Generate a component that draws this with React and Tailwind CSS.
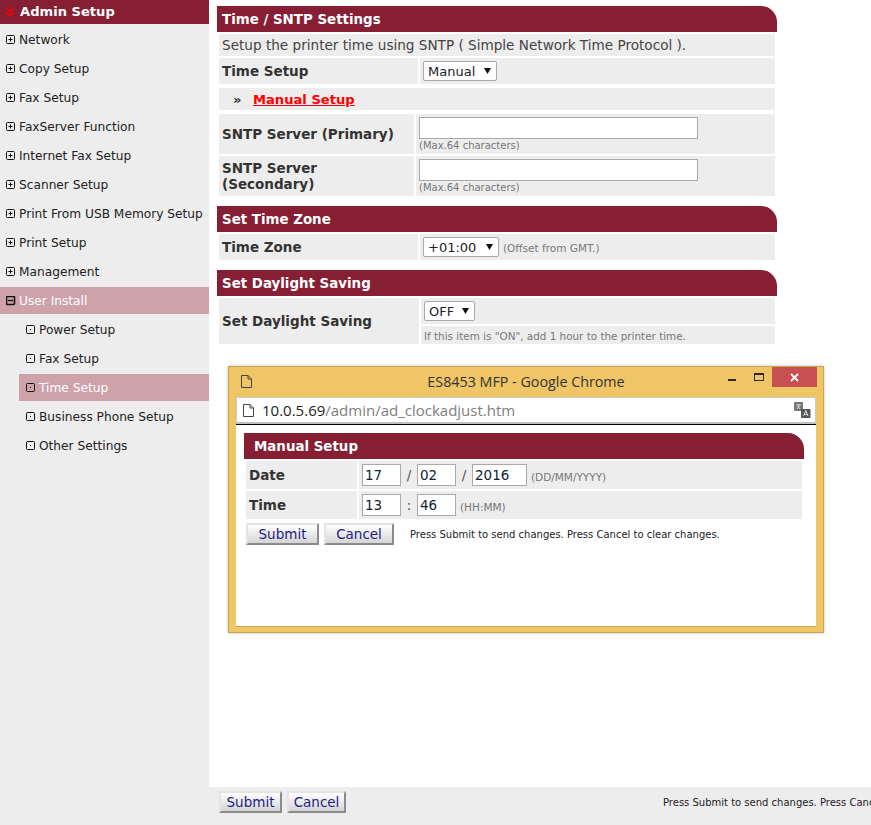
import React from 'react';

const menuItems = [
    { label: 'Network' },
    { label: 'Copy Setup' },
    { label: 'Fax Setup' },
    { label: 'FaxServer Function' },
    { label: 'Internet Fax Setup' },
    { label: 'Scanner Setup' },
    { label: 'Print From USB Memory Setup' },
    { label: 'Print Setup' },
    { label: 'Management' },
    { label: 'User Install', open: true, active: true },
    { label: 'Power Setup', sub: true },
    { label: 'Fax Setup', sub: true },
    { label: 'Time Setup', sub: true, active: true },
    { label: 'Business Phone Setup', sub: true },
    { label: 'Other Settings', sub: true },
];

function TreeIcon({ type }) {
    const strokeWidth = type === 'minus' ? 1.6 : 1;
    return (
        <svg width="10" height="10" viewBox="0 0 10 10" className="shrink-0">
            <rect x="0.5" y="0.5" width="8" height="8" rx="1" fill="none" stroke="#111" strokeWidth={strokeWidth} />
            {type === 'dot' && <rect x="4" y="4" width="1" height="1" fill="#111" />}
            {type === 'plus' && <path d="M2.5 4.5h4M4.5 2.5v4" stroke="#111" fill="none" />}
            {type === 'minus' && <path d="M2 4.5h5" stroke="#111" strokeWidth="1.4" fill="none" />}
        </svg>
    );
}

function MenuRow({ item }) {
    const icon = item.sub ? 'dot' : item.open ? 'minus' : 'plus';
    return (
        <div className="h-[29px] py-[1px]">
            <div className={`h-full flex items-center gap-[3px] text-[12.2px] ${item.sub ? 'ml-[19px] pl-[7px]' : 'pl-[6px]'} ${item.active ? 'bg-[#cda2a9] text-white' : 'text-[#222]'}`}>
                <TreeIcon type={icon} />
                <span className="whitespace-nowrap pt-[2px]">{item.label}</span>
            </div>
        </div>
    );
}

function Sidebar() {
    return (
        <aside className="w-[209px] shrink-0 bg-[#ededed]">
            <div className="h-[24px] bg-[#861f34] flex items-center gap-[6px] pl-[6px] text-white font-bold text-[13.1px]">
                <svg width="8" height="9" viewBox="0 0 8 9" className="shrink-0">
                    <path d="M0.5 0.5L4 3.5L7.5 0.5M0.5 4.5L4 7.5L7.5 4.5" fill="none" stroke="#ff0000" strokeWidth="1.6" />
                </svg>
                Admin Setup
            </div>
            <div className="pt-[1px]">
                {menuItems.map((item, i) => (
                    <MenuRow key={i} item={item} />
                ))}
            </div>
        </aside>
    );
}

function SectionHeader({ children, inset = 'pl-[5px]' }) {
    return (
        <div className={`h-[26px] pt-[2px] bg-[#861f34] rounded-tr-[16px] flex items-center ${inset} text-white font-bold text-[13.4px]`}>
            {children}
        </div>
    );
}

function Label({ width, children }) {
    return (
        <div className={`${width} shrink-0 bg-[#ededed] flex items-center pl-[3px] font-bold text-[13.5px] leading-[16px] text-[#333]`}>
            {children}
        </div>
    );
}

function FakeSelect({ value, width }) {
    return (
        <div className={`${width} h-[20px] bg-white border border-[#a9a9a9] rounded-[2px] flex items-center justify-between pl-[4px] pr-[5px] text-[13px] text-[#222]`}>
            <span className="pt-[1px]">{value}</span>
            <svg width="7" height="6" viewBox="0 0 7 6" className="shrink-0">
                <path d="M0 0h7L3.5 6z" fill="#111" />
            </svg>
        </div>
    );
}

function Hint({ size = 'text-[10.5px]', children }) {
    return <span className={`${size} text-[#777] whitespace-nowrap`}>{children}</span>;
}

function TextBox({ width, value }) {
    return (
        <input
            readOnly
            defaultValue={value}
            className={`${width} h-[22px] bg-white border border-[#a9a9a9] px-[2px] text-[13.5px] text-[#123] outline-none`}
        />
    );
}

function ServerRow({ label }) {
    return (
        <div className="flex gap-[2px] h-[40px]">
            <Label width="w-[195px]">{label}</Label>
            <div className="flex-1 bg-[#ededed] pl-[3px] pt-[3px] flex flex-col">
                <TextBox width="w-[279px]" />
                <div className="leading-[10px]"><Hint size="text-[10px]">(Max.64 characters)</Hint></div>
            </div>
        </div>
    );
}

function PushButton({ width, children }) {
    return (
        <button className={`${width} h-[22px] shrink-0 bg-gradient-to-b from-white to-[#d4d4d4] border-2 border-t-[#e4e4e4] border-l-[#e4e4e4] border-r-[#8c8c8c] border-b-[#8c8c8c] flex items-center justify-center text-[13.5px] text-[#1c1c88]`}>
            {children}
        </button>
    );
}

function PageIcon() {
    return (
        <svg width="11" height="13" viewBox="0 0 11 13" className="shrink-0">
            <path d="M0.5 0.5h6.5l3.5 3.5v8.5h-10zM7 0.5v3.5h3.5" fill="none" stroke="#444" />
        </svg>
    );
}

function PopupWindow() {
    return (
        <div className="absolute left-[19px] top-[366px] w-[596px] h-[267px] bg-[#f0c566] border border-[#c8a650] shadow-[0_0_3px_rgba(0,0,0,0.25)] flex flex-col px-[7px]">
            <div className="h-[30px] shrink-0 grid grid-cols-[1fr_auto_1fr]">
                <div className="pl-[5px] pt-[8px]">
                    <PageIcon />
                </div>
                <div className="flex items-center text-[14.3px] text-[#333] font-['Open_Sans',sans-serif] whitespace-nowrap">
                    ES8453 MFP - Google Chrome
                </div>
                <div className="flex justify-end items-start -mr-[1px]">
                    <div className="mt-[12px] w-[8px] h-[2px] bg-[#2b2b2b] mr-[18px]" />
                    <div className="mt-[6px] w-[10px] h-[8px] border border-t-2 border-[#2b2b2b] mr-[8px]" />
                    <div className="w-[45px] h-[20px] bg-[#c75050] flex items-center justify-center">
                        <svg width="9" height="9" viewBox="0 0 9 9">
                            <path d="M1 1l7 7M8 1l-7 7" stroke="#fff" strokeWidth="1.8" fill="none" />
                        </svg>
                    </div>
                </div>
            </div>
            <div className="h-[27px] shrink-0 bg-white border border-[#c9c9c9] border-b-2 border-b-[#c0c0c0] flex items-center justify-between pl-[6px] pr-[4px]">
                <div className="flex items-center gap-[8px] font-['Open_Sans',sans-serif] text-[15px]">
                    <PageIcon />
                    <span className="text-[#222] whitespace-nowrap">10.0.5.69<span className="text-[#808080]">/admin/ad_clockadjust.htm</span></span>
                </div>
                <svg width="17" height="16" viewBox="0 0 17 16" className="shrink-0">
                    <rect x="0" y="0" width="9" height="9" rx="1" fill="#777" />
                    <path d="M2 3h5M4.5 2v1M3 7l3-4M6 7L3.500 4" stroke="#eee" strokeWidth="0.8" fill="none" />
                    <rect x="7" y="7" width="9.500" height="9" rx="1" fill="#555" />
                    <path d="M9.500 14l2.300-5.500L14 14M10.300 12.300h3" stroke="#eee" strokeWidth="0.9" fill="none" />
                </svg>
            </div>
            <div className="h-[203px] shrink-0 bg-white border-t border-t-black border-b border-b-[#c8a650] pt-[8px] px-[8px]">
                <div className="w-[560px]">
                    <SectionHeader inset="pl-[10px]">Manual Setup</SectionHeader>
                    <div className="px-[2px] pt-[2px] flex flex-col gap-[2px]">
                        <div className="flex gap-[2px] h-[28px]">
                            <Label width="w-[111px]">Date</Label>
                            <div className="flex-1 bg-[#ededed] flex items-center pl-[3px] text-[13.5px] text-[#555]">
                                <TextBox width="w-[39px]" value="17" />
                                <span className="w-[16px] text-center">/</span>
                                <TextBox width="w-[39px]" value="02" />
                                <span className="w-[16px] text-center">/</span>
                                <TextBox width="w-[55px]" value="2016" />
                                <span className="ml-[4px] pt-[2px]"><Hint>(DD/MM/YYYY)</Hint></span>
                            </div>
                        </div>
                        <div className="flex gap-[2px] h-[28px]">
                            <Label width="w-[111px]">Time</Label>
                            <div className="flex-1 bg-[#ededed] flex items-center pl-[3px] text-[13.5px] text-[#555]">
                                <TextBox width="w-[39px]" value="13" />
                                <span className="w-[16px] text-center">:</span>
                                <TextBox width="w-[39px]" value="46" />
                                <span className="ml-[4px] pt-[2px]"><Hint>(HH:MM)</Hint></span>
                            </div>
                        </div>
                        <div className="flex items-center mt-[2px]">
                            <PushButton width="w-[73px]">Submit</PushButton>
                            <div className="w-[5px]" />
                            <PushButton width="w-[70px]">Cancel</PushButton>
                            <span className="ml-[16px] text-[10px] text-[#222] whitespace-nowrap">Press Submit to send changes. Press Cancel to clear changes.</span>
                        </div>
                    </div>
                </div>
            </div>
        </div>
    );
}

export default function App() {
    return (
        <div className="h-screen flex overflow-hidden bg-white font-['DejaVu_Sans',sans-serif]">
            <Sidebar />
            <div className="relative flex-1 min-w-0 flex flex-col">
                <main className="flex-1 pt-[6px] pl-[8px]">
                    <div className="w-[560px]">
                        <SectionHeader>Time / SNTP Settings</SectionHeader>
                        <div className="px-[2px] pt-[2px]">
                            <div className="h-[22px] bg-[#ededed] flex items-center pl-[3px] text-[13.6px] text-[#444]">
                                Setup the printer time using SNTP ( Simple Network Time Protocol ).
                            </div>
                            <div className="flex gap-[2px] h-[26px] mt-[2px]">
                                <Label width="w-[199px]">Time Setup</Label>
                                <div className="flex-1 bg-[#ededed] flex items-center pl-[3px]">
                                    <FakeSelect value="Manual" width="w-[74px]" />
                                </div>
                            </div>
                            <div className="h-[22px] mt-[4px] pt-[2px] bg-[#ededed] flex items-center pl-[14px] font-bold text-[13.1px]">
                                <span className="text-[#333] w-[20px]">»</span>
                                <a href="#" className="text-[#ff0000] underline">Manual Setup</a>
                            </div>
                            <div className="mt-[4px] flex flex-col gap-[2px]">
                                <ServerRow label="SNTP Server (Primary)" />
                                <ServerRow label={<span>SNTP Server<br />(Secondary)</span>} />
                            </div>
                        </div>

                        <div className="mt-[10px]">
                            <SectionHeader>Set Time Zone</SectionHeader>
                        </div>
                        <div className="px-[2px] pt-[2px]">
                            <div className="flex gap-[2px] h-[26px]">
                                <Label width="w-[199px]">Time Zone</Label>
                                <div className="flex-1 bg-[#ededed] flex items-center gap-[4px] pl-[3px]">
                                    <FakeSelect value="+01:00" width="w-[76px]" />
                                    <Hint size="text-[10.5px] pt-[4px]">(Offset from GMT.)</Hint>
                                </div>
                            </div>
                        </div>

                        <div className="mt-[10px]">
                            <SectionHeader>Set Daylight Saving</SectionHeader>
                        </div>
                        <div className="px-[2px] pt-[2px]">
                            <div className="flex gap-[2px] h-[46px]">
                                <Label width="w-[200px]">Set Daylight Saving</Label>
                                <div className="flex-1 flex flex-col gap-[2px]">
                                    <div className="h-[26px] bg-[#ededed] flex items-center pl-[3px]">
                                        <FakeSelect value="OFF" width="w-[51px]" />
                                    </div>
                                    <div className="h-[18px] bg-[#ededed] flex items-center pl-[3px]">
                                        <Hint size="text-[10.4px] pt-[4px]">If this item is "ON", add 1 hour to the printer time.</Hint>
                                    </div>
                                </div>
                            </div>
                        </div>
                    </div>
                </main>
                <footer className="h-[38px] shrink-0 bg-[#ededed] flex items-start pt-[4px] pl-[10px] overflow-hidden">
                    <PushButton width="w-[63px]">Submit</PushButton>
                    <div className="w-[5px] shrink-0" />
                    <PushButton width="w-[59px]">Cancel</PushButton>
                    <span className="ml-[317px] mt-[4px] shrink-0 text-[10px] text-[#222] whitespace-nowrap">Press Submit to send changes. Press Cancel to clear changes.</span>
                </footer>
                <PopupWindow />
            </div>
        </div>
    );
}
